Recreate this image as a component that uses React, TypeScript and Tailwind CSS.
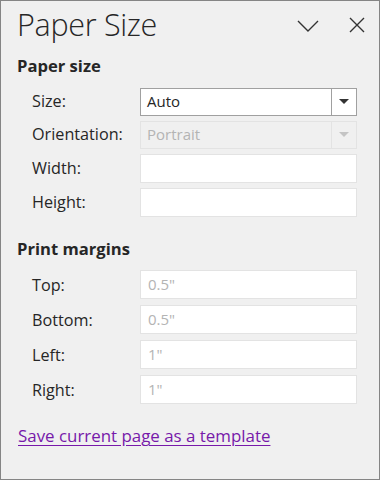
import React from "react";

const font = { fontFamily: '"Open Sans", "Noto Sans", sans-serif' };

function Label({ children }: { children: React.ReactNode }) {
  return <div className="w-[108px] text-[16.2px] text-[#262626] leading-none">{children}</div>;
}

function TextBox({ value }: { value?: string }) {
  return (
    <div className="flex items-center w-[217px] h-[29px] bg-white border border-[#e3e3e3] px-[7px] text-[15px] text-[#b4b4b4]">
      {value}
    </div>
  );
}

function Row({ label, children }: { label: string; children: React.ReactNode }) {
  return (
    <div className="flex items-center pl-[31px]">
      <Label>{label}</Label>
      {children}
    </div>
  );
}

function Caret({ color }: { color: string }) {
  return (
    <svg width="10" height="5" viewBox="0 0 10 5">
      <path d="M0 0 H10 L5 5 Z" fill={color} />
    </svg>
  );
}

export default function App() {
  return (
    <div className="w-[380px] h-[480px] border border-[#858585] bg-[#f0f0f0] relative" style={font}>
      <div className="flex items-center h-[48px] pl-[16px] pr-[14px]">
        <div className="text-[30.5px] font-light text-[#262626] leading-none tracking-[-0.3px] mt-[-2px]">Paper Size</div>
        <div className="ml-auto flex items-center gap-[30px]">
          <svg width="22" height="12" viewBox="0 0 22 12" className="mt-[2px]">
            <path d="M1 1 L11 11 L21 1" fill="none" stroke="#333" strokeWidth="1.4" />
          </svg>
          <svg width="16" height="16" viewBox="0 0 16 16">
            <path d="M1 1 L15 15 M15 1 L1 15" fill="none" stroke="#333" strokeWidth="1.4" />
          </svg>
        </div>
      </div>

      <div className="pl-[16px] mt-[9px] text-[16.6px] font-bold text-[#262626] leading-none">Paper size</div>

      <div className="flex flex-col gap-[5px] mt-[13px]">
        <Row label="Size:">
          <div className="flex w-[217px] h-[28px] bg-white border border-[#a0a0a0]">
            <div className="flex-1 flex items-center px-[6px] text-[15px] text-[#262626]">Auto</div>
            <div className="w-[25px] border-l border-[#a0a0a0] flex items-center justify-center">
              <Caret color="#333" />
            </div>
          </div>
        </Row>
        <Row label="Orientation:">
          <div className="flex w-[217px] h-[28px] bg-[#f0f0f0] border border-[#e3e3e3]">
            <div className="flex-1 flex items-center px-[6px] text-[15px] text-[#b4b4b4]">Portrait</div>
            <div className="w-[25px] border-l border-[#e3e3e3] flex items-center justify-center">
              <Caret color="#c4c4c4" />
            </div>
          </div>
        </Row>
        <Row label="Width:">
          <TextBox />
        </Row>
        <Row label="Height:">
          <TextBox />
        </Row>
      </div>

      <div className="pl-[16px] mt-[24px] text-[16.6px] font-bold text-[#262626] leading-none">Print margins</div>

      <div className="flex flex-col gap-[6px] mt-[13px]">
        <Row label="Top:">
          <TextBox value={'0.5"'} />
        </Row>
        <Row label="Bottom:">
          <TextBox value={'0.5"'} />
        </Row>
        <Row label="Left:">
          <TextBox value={'1"'} />
        </Row>
        <Row label="Right:">
          <TextBox value={'1"'} />
        </Row>
      </div>

      <div className="pl-[17px] mt-[20px]">
        <span className="text-[16.9px] text-[#7719aa] underline underline-offset-[3px] leading-none">
          Save current page as a template
        </span>
      </div>
    </div>
  );
}
